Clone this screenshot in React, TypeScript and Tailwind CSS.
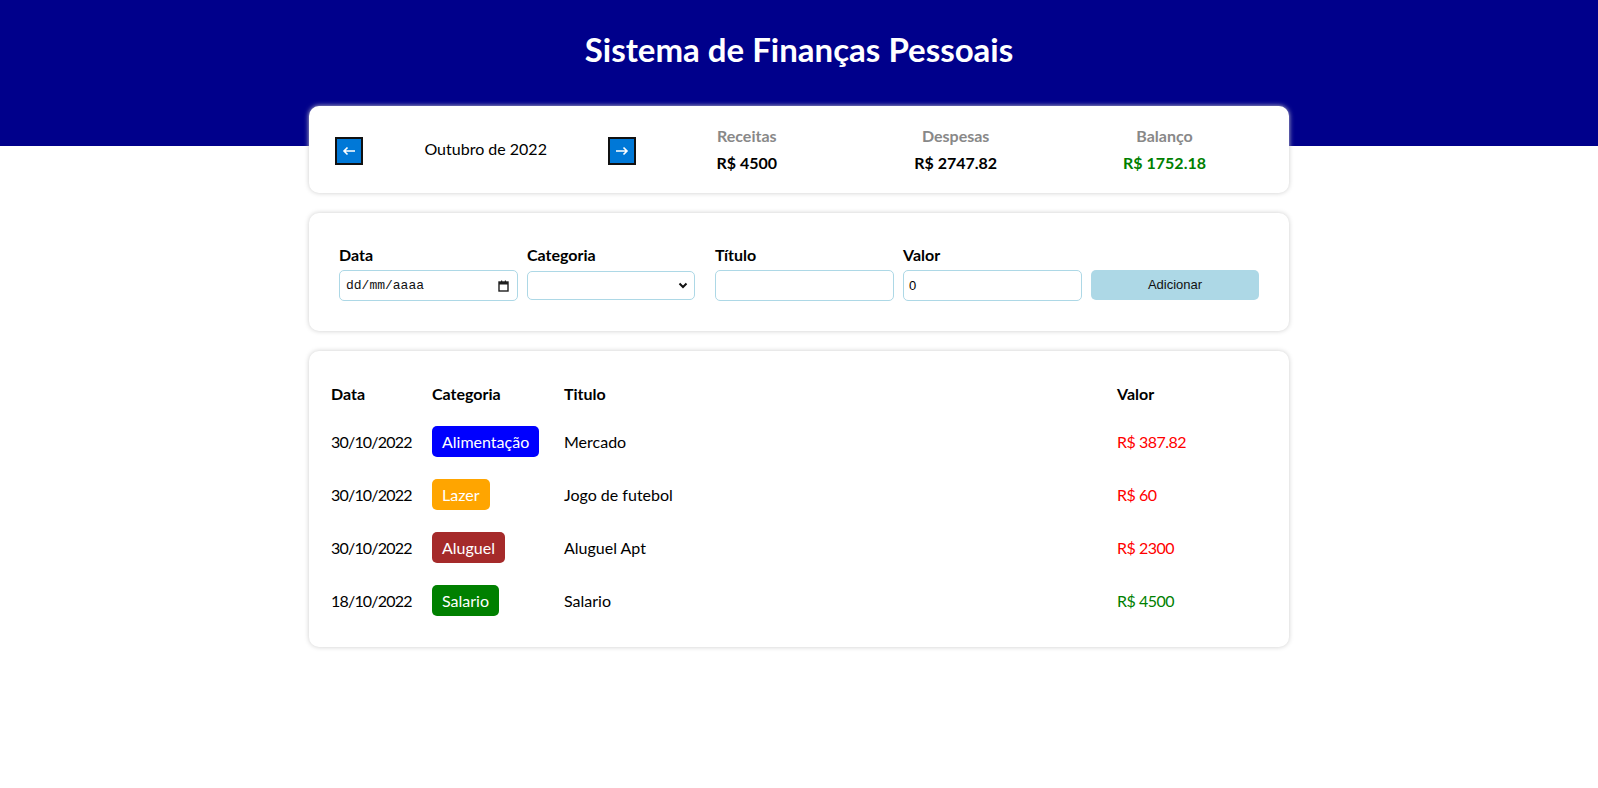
import React from 'react';

interface Item {
  date: string;
  category: string;
  color: string;
  title: string;
  value: string;
  expense: boolean;
}

const items: Item[] = [
  { date: '30/10/2022', category: 'Alimentação', color: 'bg-[#0000ff]', title: 'Mercado', value: 'R$ 387.82', expense: true },
  { date: '30/10/2022', category: 'Lazer', color: 'bg-[#ffa500]', title: 'Jogo de futebol', value: 'R$ 60', expense: true },
  { date: '30/10/2022', category: 'Aluguel', color: 'bg-[#a52a2a]', title: 'Aluguel Apt', value: 'R$ 2300', expense: true },
  { date: '18/10/2022', category: 'Salario', color: 'bg-[#008000]', title: 'Salario', value: 'R$ 4500', expense: false },
];

const CalendarIcon = () => (
  <svg width="11" height="12" viewBox="0 0 11 12" className="shrink-0">
    <rect x="1" y="2" width="9" height="9" fill="none" stroke="#1f1f1f" strokeWidth="1.4" />
    <rect x="1" y="2" width="9" height="2.5" fill="#1f1f1f" />
    <rect x="3" y="0.5" width="1.2" height="2" fill="#1f1f1f" />
    <rect x="6.8" y="0.5" width="1.2" height="2" fill="#1f1f1f" />
  </svg>
);

const Chevron = () => (
  <svg width="10" height="7" viewBox="0 0 10 7" className="shrink-0">
    <path d="M1.5 1.5 L5 5 L8.5 1.5" fill="none" stroke="#111" strokeWidth="2" />
  </svg>
);

function ArrowButton({ dir }: { dir: 'left' | 'right' }) {
  return (
    <button className="w-[28px] h-[28px] mt-[3px] bg-[#0078d7] border-2 border-[#111] flex items-center justify-center">
      <svg width="14" height="10" viewBox="0 0 14 10">
        {dir === 'left' ? (
          <path d="M13 5 H2 M5.5 1.5 L2 5 L5.5 8.5" fill="none" stroke="white" strokeWidth="1.6" />
        ) : (
          <path d="M1 5 H12 M8.5 1.5 L12 5 L8.5 8.5" fill="none" stroke="white" strokeWidth="1.6" />
        )}
      </svg>
    </button>
  );
}

function InfoItem({ label, value, color }: { label: string; value: string; color: string }) {
  return (
    <div className="flex-1 flex flex-col items-center">
      <div className="font-bold text-[16px] leading-[19px] text-[#888888] mb-[8px]">{label}</div>
      <div className={`font-bold text-[16px] leading-[19px] ${color}`}>{value}</div>
    </div>
  );
}

export default function App() {
  return (
    <div className="min-h-screen bg-white font-['Lato',sans-serif] text-black">
      {/* Header */}
      <div className="h-[146px] bg-[#00008b] pt-[29px]">
        <h1 className="text-center text-white font-bold text-[33px] leading-[40px]">Sistema de Finanças Pessoais</h1>
      </div>

      <div className="w-[980px] mx-auto -mt-[40px] flex flex-col gap-[20px]">
        {/* Resumo */}
        <div className="bg-white rounded-[10px] shadow-[0_0_5px_#cccccc] px-[20px] pt-[20px] pb-[21px] flex items-center">
          <div className="flex-1">
            <div className="flex items-center justify-between px-[6px]">
              <ArrowButton dir="left" />
              <div className="text-[16px]">Outubro de 2022</div>
              <ArrowButton dir="right" />
            </div>
          </div>
          <div className="flex-[2] flex">
            <InfoItem label="Receitas" value="R$ 4500" color="text-black" />
            <InfoItem label="Despesas" value="R$ 2747.82" color="text-black" />
            <InfoItem label="Balanço" value="R$ 1752.18" color="text-[#008000]" />
          </div>
        </div>

        {/* Formulário */}
        <div className="bg-white rounded-[10px] shadow-[0_0_5px_#cccccc] pl-[30px] pt-[32px] pb-[30px] flex items-end">
          <label className="w-[179px] mr-[9px] flex flex-col">
            <span className="font-bold text-[16px] leading-[19px] mb-[6px]">Data</span>
            <div className="h-[31px] border border-[#add8e6] rounded-[5px] flex items-center justify-between pl-[6px] pr-[8px]">
              <span className="font-['Liberation_Mono',monospace] text-[13px] text-[#111]">dd/mm/aaaa</span>
              <CalendarIcon />
            </div>
          </label>
          <label className="w-[168px] mr-[20px] mb-[1px] flex flex-col">
            <span className="font-bold text-[16px] leading-[19px] mb-[7px]">Categoria</span>
            <div className="h-[29px] border border-[#add8e6] rounded-[5px] flex items-center justify-end pr-[6px]">
              <Chevron />
            </div>
          </label>
          <label className="w-[179px] mr-[9px] flex flex-col">
            <span className="font-bold text-[16px] leading-[19px] mb-[6px]">Título</span>
            <input type="text" className="h-[31px] border border-[#add8e6] rounded-[5px] px-[5px] text-[13px] font-['Liberation_Sans',sans-serif] outline-none" />
          </label>
          <label className="w-[179px] mr-[9px] flex flex-col">
            <span className="font-bold text-[16px] leading-[19px] mb-[6px]">Valor</span>
            <input type="text" defaultValue="0" className="h-[31px] border border-[#add8e6] rounded-[5px] px-[5px] text-[13px] font-['Liberation_Sans',sans-serif] outline-none" />
          </label>
          <button className="w-[168px] h-[30px] mb-[1px] bg-[#add8e6] rounded-[5px] text-[13px] font-['Liberation_Sans',sans-serif] text-[#111]">
            Adicionar
          </button>
        </div>

        {/* Tabela */}
        <div className="bg-white rounded-[10px] shadow-[0_0_5px_#cccccc] pl-[22px] pr-[20px] pt-[21px] pb-[20px]">
          <div className="grid grid-cols-[101px_132px_1fr_152px] items-center h-[43px] font-bold text-[16px]">
            <div>Data</div>
            <div>Categoria</div>
            <div>Titulo</div>
            <div>Valor</div>
          </div>
          {items.map((item, i) => (
            <div key={i} className="grid grid-cols-[101px_132px_1fr_152px] items-center h-[53px] text-[16px]">
              <div className="tracking-[-0.8px]">{item.date}</div>
              <div>
                <span className={`inline-block ${item.color} text-white px-[10px] py-[5px] leading-[21px] rounded-[5px]`}>
                  {item.category}
                </span>
              </div>
              <div>{item.title}</div>
              <div className={`tracking-[-0.5px] ${item.expense ? 'text-[#ff0000]' : 'text-[#008000]'}`}>{item.value}</div>
            </div>
          ))}
        </div>
      </div>
    </div>
  );
}
